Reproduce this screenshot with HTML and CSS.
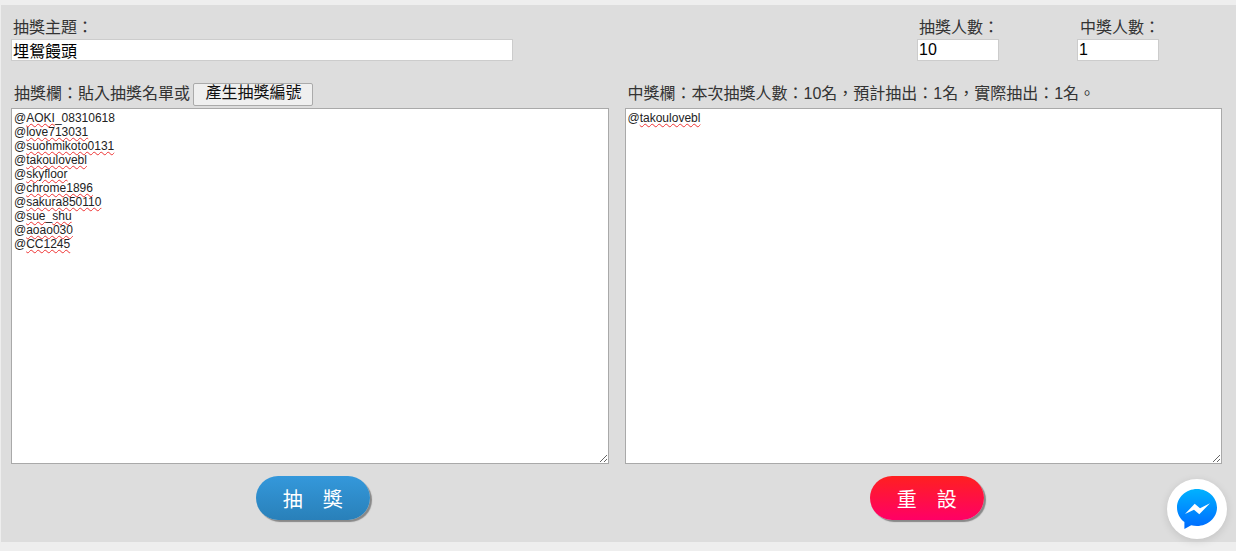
FILE: index.html
```html
<!DOCTYPE html>
<html lang="zh-Hant">

<head>
    <meta charset="UTF-8">
    <title>抽獎</title>
    <link rel="stylesheet" href="styles.css">
</head>

<body>
    <div class="panel">
        <div class="top-row">
            <div class="field field-title">
                <label for="title">抽獎主題：</label>
                <input type="text" id="title" class="input-title" value="埋鴛饅頭">
            </div>
            <div class="field field-count">
                <label for="total">抽獎人數：</label>
                <input type="text" id="total" class="input-count" value="10">
            </div>
            <div class="field field-count">
                <label for="winners">中獎人數：</label>
                <input type="text" id="winners" class="input-count" value="1">
            </div>
        </div>

        <div class="columns">
            <div class="column">
                <div class="column-head">抽獎欄：貼入抽獎名單或 <button class="btn-number">產生抽獎編號</button></div>
                <div class="list-box">
                    <div>@<span class="typo">AOKI</span>_08310618</div>
                    <div>@<span class="typo">love713031</span></div>
                    <div>@<span class="typo">suohmikoto0131</span></div>
                    <div>@<span class="typo">takoulovebl</span></div>
                    <div>@<span class="typo">skyfloor</span></div>
                    <div>@<span class="typo">chrome1896</span></div>
                    <div>@<span class="typo">sakura850110</span></div>
                    <div>@<span class="typo">sue</span>_<span class="typo">shu</span></div>
                    <div>@<span class="typo">aoao030</span></div>
                    <div>@<span class="typo">CC1245</span></div>
                </div>
                <div class="action">
                    <button class="btn-round btn-blue">抽　獎</button>
                </div>
            </div>
            <div class="column">
                <div class="column-head">中獎欄：本次抽獎人數：10名，預計抽出：1名，實際抽出：1名。</div>
                <div class="list-box">
                    <div>@<span class="typo">takoulovebl</span></div>
                </div>
                <div class="action">
                    <button class="btn-round btn-red">重　設</button>
                </div>
            </div>
        </div>
    </div>

    <a href="#" class="messenger">
        <svg width="40" height="40" viewBox="0 0 40 40">
            <defs>
                <linearGradient id="msg" x1="0" y1="0" x2="0" y2="1">
                    <stop offset="0" stop-color="#00b2ff"></stop>
                    <stop offset="1" stop-color="#006aff"></stop>
                </linearGradient>
            </defs>
            <path fill="url(#msg)" d="M20 0C9 0 0 8.300 0 18.600c0 5.900 2.900 11.100 7.400 14.500V40l6.800-3.700c1.800.5 3.800.8 5.800.8 11 0 20-8.300 20-18.500S31 0 20 0z"></path>
            <path fill="#fff" d="M8 25 17.700 14.800 23 19.300 33 14.300 22.300 25.300 17 20.800z"></path>
        </svg>
    </a>
</body>

</html>
```

FILE: styles.css
```css
body,
html {
    margin: 0;
    background-color: #eeeeee;
    font-family: "Liberation Sans", "Noto Sans CJK TC", sans-serif;
    font-size: 16px;
    color: #333;
}

body {
    padding: 5px 0 9px 1px;
    height: 551px;
    box-sizing: border-box;
    overflow: hidden;
}

.panel {
    background-color: #dddddd;
    height: 537px;
    padding: 11px 14px 0 10px;
    box-sizing: border-box;
}

.top-row {
    display: flex;
    height: 67px;
}

.field {
    flex: none;
}

.field label {
    display: block;
    height: 23px;
    line-height: 24px;
    padding-left: 2px;
}

.field-count + .field-count label {
    padding-left: 3px;
}

.field-title {
    width: 906px;
}

.field-count {
    width: 160px;
}

.field input {
    display: block;
    box-sizing: border-box;
    height: 22px;
    padding: 0 1px;
    border: 1px solid #ccc;
    background-color: #fff;
    font-family: inherit;
    font-size: 16px;
    color: #000;
    outline: none;
}

.input-title {
    width: 502px;
}

.input-count {
    width: 82px;
}

.columns {
    display: flex;
    gap: 16px;
}

.column {
    width: 598px;
}

.column-head {
    height: 25px;
    line-height: 21px;
    padding-left: 3px;
    white-space: nowrap;
}

.btn-number {
    height: 23px;
    width: 120px;
    margin-left: -1px;
    padding: 0 0 3px;
    border: 1px solid #aaa;
    border-radius: 2px;
    background-color: #efefef;
    font-family: inherit;
    font-size: 16px;
    line-height: 18px;
    color: #111;
    vertical-align: top;
}

.list-box {
    box-sizing: border-box;
    height: 356px;
    padding: 2px 2px;
    border: 1px solid #a9a9a9;
    background-color: #fff;
    font-size: 12px;
    line-height: 14px;
    color: #222;
    overflow: auto;
    resize: both;
}

.typo {
    text-decoration: underline wavy #e33;
    text-decoration-thickness: 1px;
    text-underline-offset: 1px;
}

.action {
    display: flex;
    justify-content: center;
    padding: 12px 0 0 6px;
}

.btn-round {
    width: 114px;
    height: 44px;
    padding: 0;
    border: 0;
    border-radius: 22px;
    font-family: inherit;
    font-size: 20px;
    color: #fff;
    box-shadow: 2px 2px 1px #888;
}

.btn-blue {
    background: linear-gradient(#3498db, #2980b9);
}

.btn-red {
    margin-left: 1px;
    background: linear-gradient(#ff2020, #ff0066);
}

.messenger {
    position: fixed;
    left: 1167px;
    top: 479px;
    width: 60px;
    height: 60px;
    border-radius: 50%;
    background-color: #fff;
    box-shadow: 0 2px 8px rgba(0, 0, 0, 0.12);
    display: flex;
    align-items: center;
    justify-content: center;
}
```
